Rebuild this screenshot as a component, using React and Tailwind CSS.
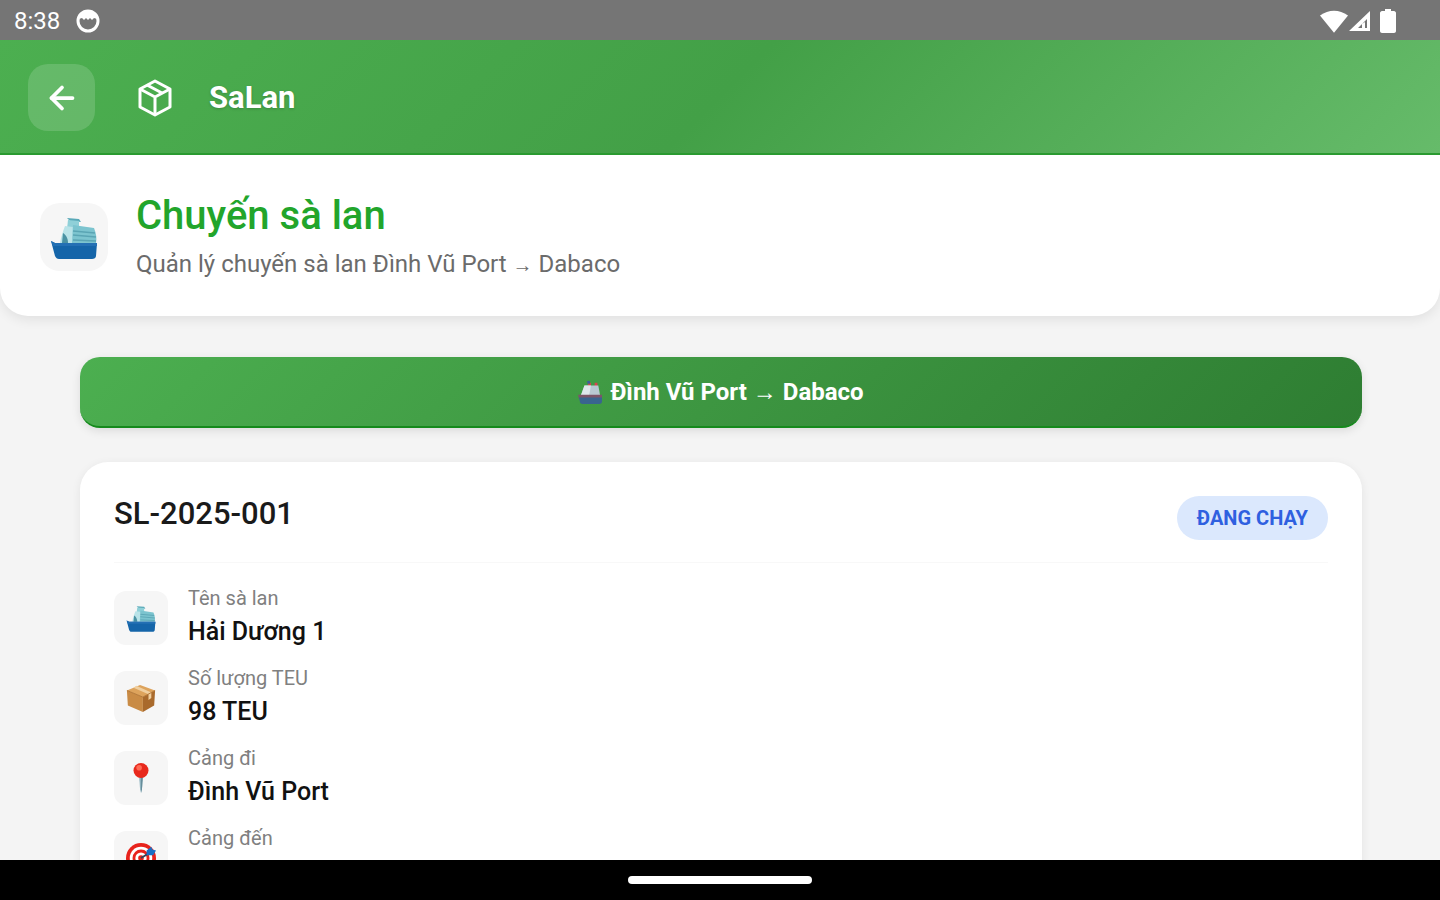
import { ArrowLeft } from "lucide-react";

const ShipIcon = ({ className }) => (
    <svg viewBox="0 0 48 44" className={className} aria-hidden="true">
        <path d="M17 3l12 1 2 3-11-1z" fill="#5aa9b8" />
        <path d="M18 5l11 1v7l-12 1z" fill="#8fd0d8" />
        <path d="M15 11l8 1v16H10c1-6 3-12 5-17z" fill="#b9e3e8" />
        <path d="M23 10l21 3c2 5 3 10 2 15H22z" fill="#7cc4cf" />
        <path d="M23 16l22 2M23 20l23 2M23 25l23 1" stroke="#5aa5b4" strokeWidth="1.4" />
        <path d="M13 18c3 2 5 5 5 10h-6z" fill="#4a92a3" />
        <path d="M1 26l4 2h42l-1 13c0 2-2 3-4 3H9c-2 0-3-1-4-3z" fill="#1565a9" />
        <path d="M1 26l4 2h42v3H3z" fill="#2470b4" />
    </svg>
);

const PassengerShipIcon = ({ className }) => (
    <svg viewBox="0 0 26 26" className={className} aria-hidden="true">
        <path d="M11 3h3v4h-3zM18 3h3v4h-3z" fill="#d8434e" />
        <path d="M10 1h3v3h-3z" fill="#3c5f9c" />
        <path d="M7 6h15l2 11H3z" fill="#b9c8d2" />
        <path d="M7 6h7l-2 11H3z" fill="#dfe7ec" />
        <path d="M0 16h26v4H1z" fill="#7d5468" />
        <path d="M1 19h25v4c0 2-1 3-3 3H5c-2 0-3-1-3-3z" fill="#39648f" />
    </svg>
);

const PackageIcon = ({ className }) => (
    <svg viewBox="0 0 32 32" className={className} aria-hidden="true">
        <path d="M1 8l14-6 16 6-13 7z" fill="#dda35c" />
        <path d="M1 8l17 7v16L2 24z" fill="#c98b45" />
        <path d="M18 15l13-7-1 16-12 7z" fill="#a96a2c" />
        <path d="M8 5l16 7v6l3-2v-6L11 3z" fill="#f0cf9f" />
        <path d="M1 8l17 7 13-7" stroke="#b27636" fill="none" />
    </svg>
);

const PinIcon = ({ className }) => (
    <svg viewBox="0 0 32 32" className={className} aria-hidden="true">
        <path d="M14 14h4l-1 14-1 4-1-4z" fill="#8fb3bf" />
        <path d="M16 14h2l-1 14-1 4z" fill="#668d9b" />
        <circle cx="16" cy="8" r="8" fill="#e8291c" />
        <circle cx="14" cy="5" r="3" fill="#ff6a55" />
    </svg>
);

const TargetIcon = ({ className }) => (
    <svg viewBox="0 0 32 32" className={className} aria-hidden="true">
        <circle cx="16" cy="16" r="16" fill="#e8231c" />
        <circle cx="16" cy="16" r="12" fill="#fff" />
        <circle cx="16" cy="16" r="9" fill="#e8231c" />
        <circle cx="16" cy="16" r="6" fill="#fff" />
        <circle cx="16" cy="16" r="3" fill="#e8231c" />
        <path d="M16 16l10-6" stroke="#31445c" strokeWidth="2" />
        <path d="M22 8l5-4 1 3 4 1-3 5h-7z" fill="#1b6fc4" />
    </svg>
);

const CrateIcon = ({ className }) => (
    <svg viewBox="0 0 36 38" fill="none" stroke="currentColor" strokeWidth="3" strokeLinejoin="round" className={className} aria-hidden="true">
        <path d="M18 2l15 8v18l-15 8-15-8V10z" />
        <path d="M3 10l15 8 15-8M18 18v18M10 6l15 8" />
    </svg>
);

const DETAILS = [
    { label: "Tên sà lan", value: "Hải Dương 1", Icon: ShipIcon },
    { label: "Số lượng TEU", value: "98 TEU", Icon: PackageIcon },
    { label: "Cảng đi", value: "Đình Vũ Port", Icon: PinIcon },
    { label: "Cảng đến", Icon: TargetIcon },
];

const StatusBar = () => (
    <div className="h-10 shrink-0 flex items-center justify-between pl-3.5 pr-11 pt-0.5 bg-[#757575] text-white">
        <div className="flex items-center gap-4">
            <span className="text-2xl">8:38</span>
            <svg viewBox="0 0 24 24" className="w-6 h-6" aria-hidden="true">
                <circle cx="12" cy="12" r="10" fill="none" stroke="#fff" strokeWidth="3" />
                <path d="M3 10c1-5 5-8 9-8s8 3 9 8l-3-1-2 2-2-2-2 2-2-2-2 2-2-2z" fill="#fff" />
            </svg>
        </div>
        <div className="flex items-center">
            <svg viewBox="0 0 26 22" className="w-7 h-6" aria-hidden="true">
                <path d="M0 6c8-6 18-6 26 0L13 22z" fill="#fff" />
            </svg>
            <svg viewBox="0 0 24 24" className="w-6 h-6" aria-hidden="true">
                <path d="M22 2v20H1zM19 10l-9 9h4v-4l3-2v6h2z" fill="#fff" fillRule="evenodd" />
            </svg>
            <svg viewBox="0 0 16 24" className="w-4 h-6 ml-2" aria-hidden="true">
                <path d="M5 0h6v2h3c1 0 2 1 2 2v18c0 1-1 2-2 2H2c-1 0-2-1-2-2V4c0-1 1-2 2-2h3z" fill="#fff" />
            </svg>
        </div>
    </div>
);

const DetailRow = ({ label, value, Icon }) => (
    <div className="flex items-start gap-5">
        <div className="w-[54px] h-[54px] mt-2 shrink-0 flex items-center justify-center rounded-xl bg-[#f6f6f6]">
            <Icon className="w-[30px] h-[30px]" />
        </div>
        <div>
            <dt className="text-xl leading-[30px] text-[#808080]">{label}</dt>
            {value && <dd className="text-[25px] leading-[38px] font-medium text-[#111111]">{value}</dd>}
        </div>
    </div>
);

const App = () => {
    return (
        <div className="h-screen flex flex-col overflow-hidden bg-[#f4f4f4] font-['Roboto',sans-serif]">
            <StatusBar />

            {/* App bar */}
            <header className="shrink-0 flex items-center px-7 pt-6 pb-[22px] border-b-2 border-[#2a9a30] bg-[linear-gradient(135deg,#4caf50_0%,#43a047_50%,#66bb6a_100%)] text-white">
                <button aria-label="Quay lại" className="cursor-pointer w-[67px] h-[67px] flex items-center justify-center rounded-[20px] bg-white/15">
                    <ArrowLeft className="w-9 h-9" strokeWidth={2.5} />
                </button>
                <CrateIcon className="w-9 h-[38px] ml-[42px]" />
                <span className="ml-9 text-[31px] leading-9 font-bold [text-shadow:0_1px_3px_rgba(0,0,0,0.2)]">SaLan</span>
            </header>

            <main className="flex-1 min-h-0 overflow-hidden">
                {/* Page title */}
                <section className="flex items-center gap-7 px-10 pt-[34px] pb-[31px] rounded-b-[28px] bg-white shadow-[0_4px_12px_rgba(0,0,0,0.08)]">
                    <div className="w-[68px] h-[68px] shrink-0 flex items-center justify-center rounded-[20px] bg-[#f6f6f6]">
                        <ShipIcon className="w-12 h-11" />
                    </div>
                    <div>
                        <h1 className="text-[40px] leading-[54px] font-medium text-[#22a52b]">Chuyến sà lan</h1>
                        <p className="text-2xl leading-[42px] text-[#6b6b6b]">
                            Quản lý chuyến sà lan Đình Vũ Port <span className="text-xl">→</span> Dabaco
                        </p>
                    </div>
                </section>

                <div className="flex flex-col gap-[34px] pl-20 pr-[78px] pt-[41px]">
                    {/* Route */}
                    <button className="cursor-pointer h-[71px] flex items-center justify-center gap-2 rounded-[20px] border-b-2 border-b-[#158a1c] bg-[linear-gradient(135deg,#4caf50,#2e7d32)] bg-origin-border text-2xl font-bold text-white shadow-[0_3px_10px_rgba(0,0,0,0.1)]">
                        <PassengerShipIcon className="w-6 h-6" />
                        Đình Vũ Port → Dabaco
                    </button>

                    {/* Trip card */}
                    <article className="px-[34px] pt-[34px] pb-10 rounded-[28px] bg-white shadow-[0_2px_10px_rgba(0,0,0,0.07)]">
                        <div className="flex items-start justify-between pb-[22px] border-b border-[#f8f8f8]">
                            <h2 className="text-[31px] leading-9 font-medium text-[#1a1a1a]">SL-2025-001</h2>
                            <span className="px-5 py-2 rounded-full bg-[#dbe8fd] text-xl font-bold text-[#2f60e0]">ĐANG CHẠY</span>
                        </div>
                        <dl className="flex flex-col gap-3 pt-5">
                            {DETAILS.map((item) => (
                                <DetailRow key={item.label} {...item} />
                            ))}
                        </dl>
                    </article>
                </div>
            </main>

            {/* Gesture bar */}
            <div className="h-10 shrink-0 flex items-center justify-center bg-black">
                <div className="w-[184px] h-2 rounded-full bg-white" />
            </div>
        </div>
    );
};

export default App;
